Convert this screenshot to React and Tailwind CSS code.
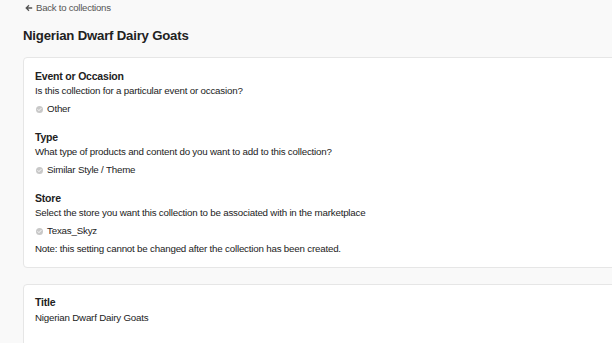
import React from 'react';

const fields = [
  {
    label: 'Event or Occasion',
    help: 'Is this collection for a particular event or occasion?',
    value: 'Other',
  },
  {
    label: 'Type',
    help: 'What type of products and content do you want to add to this collection?',
    value: 'Similar Style / Theme',
  },
  {
    label: 'Store',
    help: 'Select the store you want this collection to be associated with in the marketplace',
    value: 'Texas_Skyz',
    note: 'Note: this setting cannot be changed after the collection has been created.',
  },
];

function CheckDot() {
  return (
    <svg viewBox="0 0 12 12" className="w-[7px] h-[7px] mr-[4px]">
      <circle cx="6" cy="6" r="6" fill="#c8c8c8" />
      <path d="M3.3 6.2l1.8 1.8 3.6-3.8" fill="none" stroke="#fff" strokeWidth="1.6" strokeLinecap="round" strokeLinejoin="round" />
    </svg>
  );
}

export default function App() {
  return (
    <div
      className="w-[612px] h-[343px] overflow-hidden bg-[#f9f9f9] text-[#222]"
      style={{ fontFamily: '"Liberation Sans", Arial, sans-serif' }}
    >
      <div className="pl-[23px] pt-[2px]">
        <a className="flex items-center text-[9.6px] text-[#555] tracking-[-0.25px] h-[12px]">
          <svg viewBox="0 0 10 10" className="w-[8px] h-[8px] ml-[2px] mr-[3px]">
            <path d="M9 5H2M5 1.5L1.5 5 5 8.5" fill="none" stroke="#555" strokeWidth="1.6" />
          </svg>
          Back to collections
        </a>
        <h1 className="mt-[14px] text-[13.2px] font-bold tracking-[-0.2px] text-[#222] leading-[16px]">
          Nigerian Dwarf Dairy Goats
        </h1>

        <div className="mt-[13px] w-[620px] bg-white border border-[#e6e6e6] rounded-[4px] px-[11px] pt-[11px] pb-[12px]">
          {fields.map((f, i) => (
            <div key={f.label} className={i > 0 ? 'mt-[15px]' : ''}>
              <div className="text-[10.5px] font-bold leading-[14px] tracking-[-0.2px]">{f.label}</div>
              <div className="mt-[2px] text-[9.75px] leading-[12px] tracking-[-0.2px]">{f.help}</div>
              <div className="mt-[6px] flex items-center pl-[1px] text-[9.75px] leading-[12px] tracking-[-0.2px]">
                <CheckDot />
                {f.value}
              </div>
              {f.note && (
                <div className="mt-[6px] text-[9.75px] leading-[12px] tracking-[-0.2px]">{f.note}</div>
              )}
            </div>
          ))}
        </div>

        <div className="mt-[16px] w-[620px] h-[80px] bg-white border border-[#e6e6e6] rounded-[4px] px-[11px] pt-[10px]">
          <div className="text-[10.5px] font-bold leading-[14px] tracking-[-0.2px]">Title</div>
          <div className="mt-[3px] text-[9.75px] leading-[12px] tracking-[-0.2px]">Nigerian Dwarf Dairy Goats</div>
        </div>
      </div>
    </div>
  );
}
